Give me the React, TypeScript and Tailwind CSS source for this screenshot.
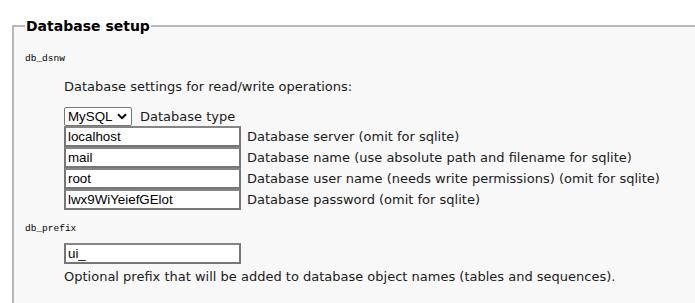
import React from 'react';

const rows = [
  { value: 'localhost', label: 'Database server (omit for sqlite)' },
  { value: 'mail', label: 'Database name (use absolute path and filename for sqlite)' },
  { value: 'root', label: 'Database user name (needs write permissions) (omit for sqlite)' },
  { value: 'lwx9WiYeiefGElot', label: 'Database password (omit for sqlite)' },
];

const inputCls =
  "w-[177px] h-[21px] border-2 border-[#767676] border-t-[#858585] bg-white px-[2px] text-[13.33px] text-black font-['Liberation_Sans',Arial,sans-serif] outline-none";

export default function App() {
  return (
    <div className="min-h-screen bg-white pt-[18px] text-[#1a1a1a] font-['DejaVu_Sans',Verdana,sans-serif] text-[13px] overflow-hidden">
      <fieldset className="ml-[12px] w-[760px] border-2 border-[#b8b8b8] bg-[#f8f8f8] pl-[11px] pr-4 pb-10">
        <legend className="px-[1px] text-[14px] font-bold leading-[16px] text-black">
          Database setup
        </legend>

        <div className="mt-[18px] font-['Liberation_Mono',monospace] text-[9.5px] leading-[14px] text-black">db_dsnw</div>
        <div className="pl-[39px]">
          <p className="mt-[13px] leading-[16px]">Database settings for read/write operations:</p>
          <div className="mt-[12px] flex items-center gap-2 leading-[16px]">
            <div className="relative">
              <select
                defaultValue="mysql"
                className="appearance-none w-[68px] h-[19px] border border-[#767676] rounded-[2px] bg-white pl-[3px] text-[13.33px] leading-[17px] text-black font-['Liberation_Sans',Arial,sans-serif] outline-none"
              >
                <option value="mysql">MySQL</option>
                <option value="pgsql">PostgreSQL</option>
                <option value="sqlite">SQLite</option>
              </select>
              <svg
                className="pointer-events-none absolute right-[5px] top-[6px] w-[10px] h-[7px]"
                viewBox="0 0 10 7"
                fill="none"
                stroke="#000"
                strokeWidth="2"
              >
                <path d="M1 1.2l4 4 4-4" />
              </svg>
            </div>
            <span>Database type</span>
          </div>
          {rows.map((r) => (
            <div key={r.value} className="flex items-center gap-[6px] leading-[16px]">
              <input type="text" defaultValue={r.value} className={inputCls} />
              <span>{r.label}</span>
            </div>
          ))}
        </div>

        <div className="mt-[12px] font-['Liberation_Mono',monospace] text-[9.5px] leading-[14px] text-black">db_prefix</div>
        <div className="pl-[39px] mt-[7px]">
          <input type="text" defaultValue="ui_" className={`${inputCls} block`} />
          <p className="mt-[5px] leading-[16px]">
            Optional prefix that will be added to database object names (tables and sequences).
          </p>
        </div>
      </fieldset>
    </div>
  );
}
